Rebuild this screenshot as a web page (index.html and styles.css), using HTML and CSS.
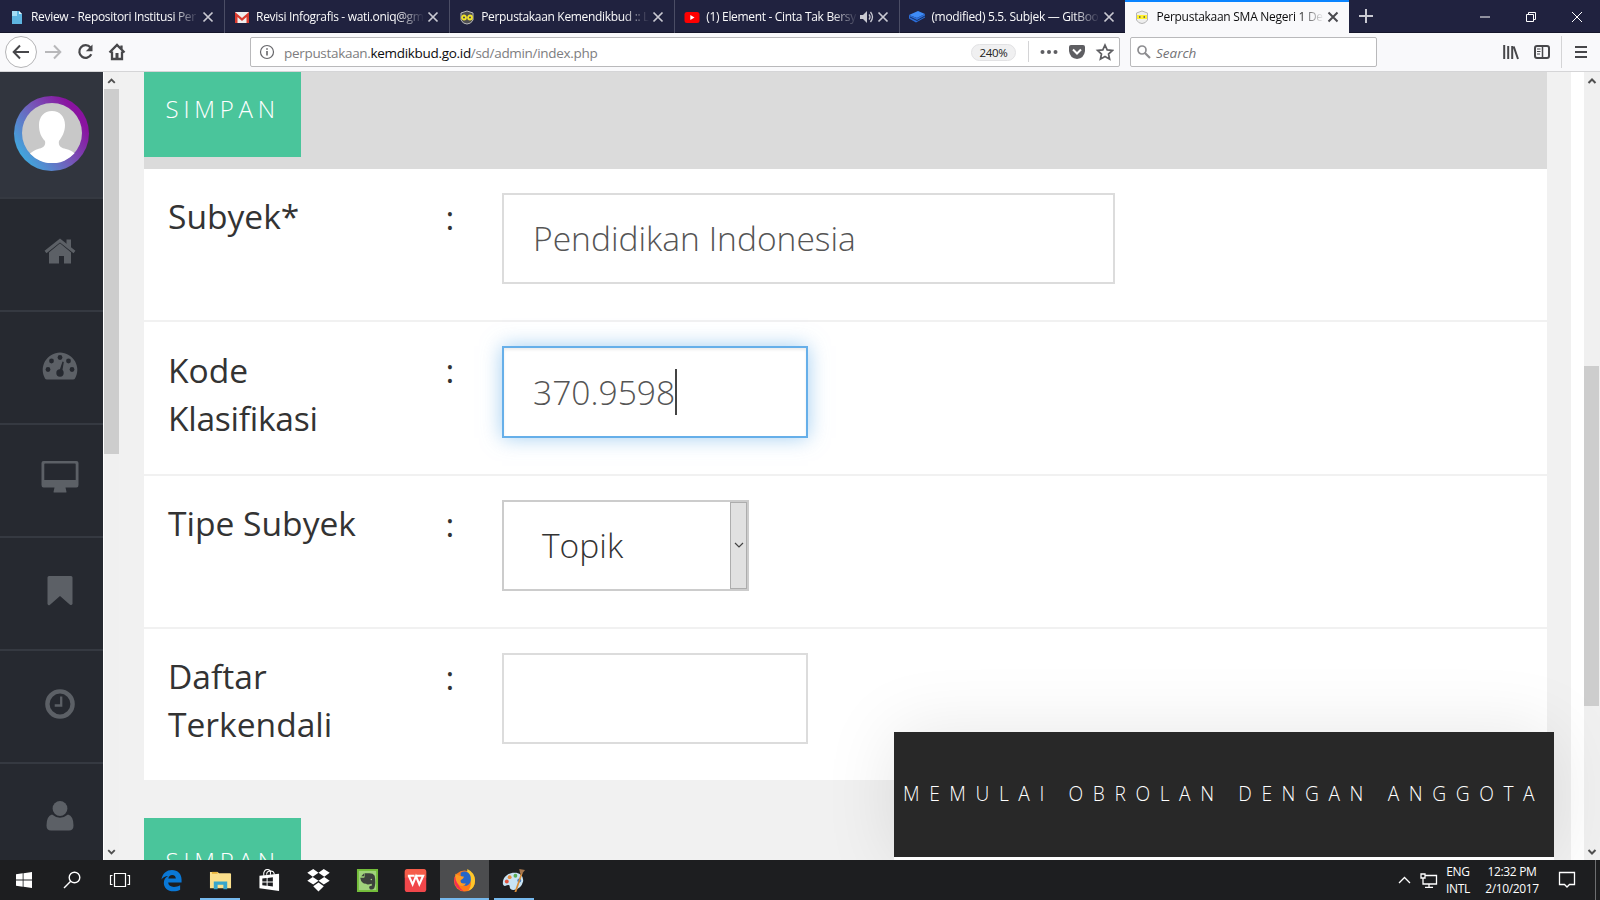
FILE: index.html
```html
<!DOCTYPE html>
<html lang="id">
<head>
<meta charset="utf-8">
<title>Perpustakaan SMA Negeri 1</title>
<link rel="stylesheet" href="styles.css">
</head>
<body>
<header class="tabs">
  <div class="tab">
    <svg class="fav" viewBox="0 0 16 16"><path d="M3 2h7l3 3v10H3z" fill="#5db4e0"/><path d="M3 2h5v5H3z" fill="#a4dcf4"/><path d="M10 2v3h3z" fill="#e8f7ff"/></svg>
    <span class="title">Review - Repositori Institusi Per</span>
    <svg class="close" viewBox="0 0 12 12"><path d="M1.5 1.5l9 9m0-9l-9 9"/></svg>
  </div>
  <div class="tab">
    <svg class="fav" viewBox="0 0 16 16"><path d="M1 3h14v11H1z" fill="#eee"/><path d="M1 14V3l7 6 7-6v11h-2.5V8L8 12 3.500 8v6z" fill="#d93a2f"/></svg>
    <span class="title">Revisi Infografis - wati.oniq@gm</span>
    <svg class="close" viewBox="0 0 12 12"><path d="M1.5 1.5l9 9m0-9l-9 9"/></svg>
  </div>
  <div class="tab">
    <svg class="fav" viewBox="0 0 16 16"><path d="M2 4l6-2 6 2v7q-2 4-6 4t-6-4z" fill="#4c4c50" stroke="#b9b9b9"/><g fill="none" stroke="#f1e32b" stroke-width="1.800"><circle cx="5" cy="8.500" r="2"/><circle cx="11" cy="8.500" r="2"/></g></svg>
    <span class="title">Perpustakaan Kemendikbud :: L</span>
    <svg class="close" viewBox="0 0 12 12"><path d="M1.500 1.500l9 9m0-9l-9 9"/></svg>
  </div>
  <div class="tab">
    <svg class="fav" viewBox="0 0 16 16"><rect x=".5" y="3" width="15" height="11" rx="2.500" fill="#f00"/><path d="M6.300 6v5l4.200-2.500z" fill="#fff"/></svg>
    <span class="title">(1) Element - Cinta Tak Bersy</span>
    <svg class="sound" viewBox="0 0 14 12"><path d="M0 4h3l4-4v12L3 8H0z" fill="#c9c9d2"/><path d="M9 3.500q2 2.500 0 5M10.500 1q4 5 0 10" fill="none" stroke="#c9c9d2" stroke-width="1.300"/></svg>
    <svg class="close" viewBox="0 0 12 12"><path d="M1.500 1.500l9 9m0-9l-9 9"/></svg>
  </div>
  <div class="tab">
    <svg class="fav" viewBox="0 0 16 16"><path d="M0 6l9-4 7 3-8 4z" fill="#3e8bf5"/><path d="M0 6v3.500l7 4 9-5V5L8 9z" fill="#2b6edb"/><path d="M1 8l7 3.500L16 7" fill="none" stroke="#17305f"/></svg>
    <span class="title">(modified) 5.5. Subjek — GitBoo</span>
    <svg class="close" viewBox="0 0 12 12"><path d="M1.500 1.500l9 9m0-9l-9 9"/></svg>
  </div>
  <div class="tab active">
    <svg class="fav" viewBox="0 0 16 16"><path d="M2.500 4L8 2l5.500 2v7q-2 3.500-5.500 3.500T2.500 11z" fill="#eee" stroke="#b5b5b5"/><path d="M3 6h10v4H3z" fill="#fff12e"/><path d="M5 8h1.500M9.500 8H11" stroke="#555" stroke-width="1.500"/></svg>
    <span class="title">Perpustakaan SMA Negeri 1 Dep</span>
    <svg class="close" viewBox="0 0 12 12"><path d="M1.500 1.500l9 9m0-9l-9 9"/></svg>
  </div>
  <svg class="newtab" viewBox="0 0 14 14"><path d="M7 0v14M0 7h14"/></svg>
  <div class="window-buttons">
    <svg viewBox="0 0 12 12"><path d="M1 6h10"/></svg>
    <svg viewBox="0 0 12 12"><path d="M1.500 3.500h7v7h-7zM3.500 3.500v-2h7v7h-2"/></svg>
    <svg viewBox="0 0 12 12"><path d="M1 1l10 10M11 1L1 11"/></svg>
  </div>
</header>

<nav class="toolbar">
  <svg class="nav-icons" viewBox="0 0 130 38" fill="none">
    <circle cx="21" cy="19" r="15.500" fill="#fff" stroke="#b5b5b7"/>
    <path d="M14 19h15M20 12.500L13.700 19l6.300 6.500" stroke="#47474a" stroke-width="2"/>
    <path d="M45 19h15M54 12.500l6.300 6.500-6.300 6.500" stroke="#b8b8ba" stroke-width="2"/>
    <path d="M90.500 14.500a6.300 6.300 0 1 0 .8 6.800" stroke="#47474a" stroke-width="2.200"/>
    <path d="M92.500 11.500v6.700h-6.700z" fill="#47474a"/>
    <path d="M109.500 19.500l7.500-7.500 7.500 7.500M112 18.500V26h10v-7.500M121.500 16v-3.500" stroke="#47474a" stroke-width="2.300"/>
    <path d="M115.500 20h3v6h-3z" fill="#47474a"/>
  </svg>
  <div class="urlbar">
    <svg class="info" viewBox="0 0 16 16"><circle cx="8" cy="8" r="6.500" fill="none" stroke="#66666a" stroke-width="1.200"/><path d="M8 7v4.500M8 4.200v1.600" stroke="#66666a" stroke-width="1.600"/></svg>
    <span class="url">perpustakaan.<b>kemdikbud.go.id</b>/sd/admin/index.php</span>
    <span class="zoom-level">240%</span>
    <svg class="actions" viewBox="0 0 86 24">
      <path d="M.5 1v21" stroke="#d4d4d6"/>
      <g fill="#5e5e62"><circle cx="14.500" cy="12" r="2"/><circle cx="21" cy="12" r="2"/><circle cx="27.500" cy="12" r="2"/><path d="M43 5h12q2 0 2 2v4q-1 7.500-8 8-7-.5-8-8V7q0-2 2-2z"/></g>
      <path d="M45 9.500l4 4 4-4" fill="none" stroke="#fff" stroke-width="2"/>
      <path d="M77 5l2.200 4.900 5.200.6-3.900 3.500 1.100 5.200-4.600-2.600-4.600 2.600 1.100-5.200-3.900-3.500 5.200-.6z" fill="none" stroke="#5e5e62" stroke-width="1.700"/>
    </svg>
  </div>
  <div class="searchbar">
    <svg viewBox="0 0 14 14"><circle cx="5" cy="5" r="4" fill="none" stroke="#8d8d90" stroke-width="1.700"/><path d="M8 8l5 5" stroke="#8d8d90" stroke-width="2.200"/></svg>
    <span>Search</span>
  </div>
  <svg class="menu-icons" viewBox="0 0 90 38" fill="none" stroke="#47474a">
    <path d="M5.200 12v14M9.200 13v13M13.200 13v13M14.700 13.500L19 26" stroke-width="2"/>
    <rect x="36" y="13" width="14" height="12" rx="2" stroke-width="2"/><path d="M43.500 13v12" stroke-width="1.500"/><path d="M38 16h3.500M38 18.500h3.500M38 21h3" stroke-width="1"/>
    <path d="M62.500 3v32" stroke="#d4d4d6"/>
    <path d="M76 14h12M76 19h12M76 24h12" stroke-width="2"/>
  </svg>
</nav>

<main class="viewport">
  <aside class="sidebar">
    <div class="profile">
      <div class="ring"><svg viewBox="0 0 60 60"><circle cx="30" cy="30" r="30" fill="#c8c8c8"/><path d="M30 8c8 0 13 6 13 14 0 7-3 12-6 16-1 5 2 7 7 8 4 1 6 2 8.500 4.300A30 30 0 0 1 8 50.500c3-2.500 5-3.500 8-4.500 5-1 8-3 7-8-4-4-6-9-6-16C17 14 22 8 30 8z" fill="#fff"/></svg></div>
    </div>
    <div class="item"><svg viewBox="0 0 40 40"><path d="M20 10.500l11 9v13h-7v-7.500h-5v7.500H9V19.500z"/><path d="M5.500 21L20 9l14.500 12" fill="none" stroke="#262930" stroke-width="5"/><path d="M26.500 8.500h4.500v9l-4.500-4z"/><path d="M5.500 21L20 9.500l14.500 11.500" fill="none" stroke="#5c6066" stroke-width="3"/></svg></div>
    <div class="item"><svg viewBox="0 0 40 40"><path d="M5 34.500A17.300 17.300 0 1 1 35 34.500q-.5 1-2 1H7q-1.500 0-2-1z"/><g fill="#262930"><circle cx="8" cy="25.500" r="2.400"/><circle cx="11.500" cy="17" r="2.400"/><circle cx="20" cy="13.500" r="2.400"/><circle cx="28.500" cy="17" r="2.400"/><circle cx="32" cy="25.500" r="2.400"/><circle cx="20" cy="29" r="3.700"/><path d="M19 28l3.500-10.500 1.300.4L22 29z"/></g></svg></div>
    <div class="item"><svg viewBox="0 0 40 40"><path fill-rule="evenodd" d="M3.500 4h33q2 0 2 2v22q0 2.500-2 2.500h-11l1 4.500q0 .5-1 .5h-11q-1 0-1-.5l1-4.500h-11q-2 0-2-2.500V6q0-2 2-2zM5 6.500q-.7 0-.7.700V23h31.400V7.200q0-.7-.7-.7z"/></svg></div>
    <div class="item"><svg viewBox="0 0 40 40"><path d="M9 6h22q1.500 0 1.500 1.500V34q-1 1.800-2.500.7L20 26l-10 8.700Q8.500 36 7.500 34V7.500Q7.500 6 9 6z"/></svg></div>
    <div class="item"><svg viewBox="0 0 40 40"><circle cx="20" cy="21" r="12.600" fill="none" stroke="#5c6066" stroke-width="4.400"/><path d="M21.200 13.500v9h-6.500" fill="none" stroke="#5c6066" stroke-width="2.300"/></svg></div>
    <div class="item"><svg viewBox="0 0 40 40"><circle cx="20" cy="12.500" r="7.400"/><path d="M12 18.500q8 6.500 16 0 5.500 1.500 5.500 11 0 5-4.500 5H11q-4.500 0-4.500-5 0-9.500 5.500-11z"/></svg></div>
  </aside>
  <div class="scroll side-scroll">
    <svg viewBox="0 0 16 17"><path d="M4.500 11L8 7.500l3.500 3.500"/></svg>
    <div class="thumb"></div>
    <svg class="down" viewBox="0 0 16 17"><path d="M4.500 7L8 10.500l3.500-3.500"/></svg>
  </div>
  <section class="content">
    <div class="actionbar"><div class="button">SIMPAN</div></div>
    <div class="form">
      <div class="row"><div class="label">Subyek*</div><div class="colon">:</div><div class="field wide">Pendidikan Indonesia</div></div>
      <div class="row"><div class="label">Kode <span class="tight">Klasifikasi</span></div><div class="colon">:</div><div class="field focus">370.9598<i class="caret"></i></div></div>
      <div class="row"><div class="label">Tipe Subyek</div><div class="colon">:</div><div class="field select"><span>Topik</span><div class="arrow"><svg viewBox="0 0 10 6"><path d="M1 1l4 4 4-4"/></svg></div></div></div>
      <div class="row"><div class="label">Daftar Terkendali</div><div class="colon">:</div><div class="field"></div></div>
    </div>
    <div class="button second">SIMPAN</div>
  </section>
  <div class="gutter"></div>
  <div class="scroll page-scroll">
    <svg viewBox="0 0 16 17"><path d="M4.500 11L8 7.500l3.500 3.500"/></svg>
    <div class="thumb"></div>
    <svg class="down" viewBox="0 0 16 17"><path d="M4.500 7L8 10.500l3.500-3.500"/></svg>
  </div>
  <div class="chat"><span>MEMULAI OBROLAN DENGAN ANGGOTA</span></div>
</main>

<footer class="taskbar">
  <div class="sys"><svg viewBox="0 0 24 24"><path d="M4 6.300l6.700-1v6.200H4zM11.500 5.200L20 4v7.500h-8.500zM4 12.500h6.700v6.300L4 17.800zM11.500 12.500H20V20l-8.500-1.200z" fill="#fff"/></svg></div>
  <div class="sys"><svg viewBox="0 0 24 24" fill="none" stroke="#fff" stroke-width="1.400"><circle cx="14.500" cy="9.500" r="5.300"/><path d="M10.700 13.300L4 20"/></svg></div>
  <div class="sys"><svg viewBox="0 0 24 24" fill="none" stroke="#fff" stroke-width="1.200"><path d="M6.500 5.500h11v13h-11zM4.500 7.500h-2v9h2M19.500 7.500h2v9h-2"/></svg></div>
  <div class="apps">
    <div class="app"><svg viewBox="0 0 24 24"><path d="M1.500 11C2.500 4.500 7 1 12.500 1 18.500 1 22.500 5 22.500 11v3.200H8.500c.3 3 2.500 4.500 6 4.500 2.500 0 4.500-.6 6.500-1.700v4.700C19 22.700 16.800 23.300 14 23.300 8 23.300 4 19.500 4 14.500c0-3.200 1.500-5.700 4.500-7.200C5.500 7.300 3.200 8.800 1.500 11zm7.200-1h7.800c0-2.300-1.300-3.800-3.800-3.800-2.100 0-3.600 1.300-4 3.800z" fill="#0a78d6"/></svg></div>
    <div class="app open"><svg viewBox="0 0 24 24"><path d="M1 3h8l1.500 1.500H22q1 0 1 1V20H1z" fill="#fbe08c"/><path d="M3 3h6v2H3z" fill="#e8b33a"/><path d="M5 13h14v8h-4v-4.500H9V21H5z" fill="#37a6cc"/></svg></div>
    <div class="app"><svg viewBox="0 0 24 24"><path d="M1.500 7L22 5v18L1.500 20z" fill="#fff"/><path d="M6 7V4q1-3.500 4-3.500 2.500 0 3 2.500v3M9 6q0-4 4-4t4 4" fill="none" stroke="#fff" stroke-width="1.100"/><path d="M4.500 10l4.500-.5V13H4.500zM10 9.300l5.500-.6V13H10zM4.500 14H9v3.500l-4.500-.5zM10 14h5.500v4.300l-5.500-.7z" fill="#1b1c1f"/></svg></div>
    <div class="app"><svg viewBox="0 0 24 24" fill="#fff"><path d="M6.500 0L12 3.800 6 8 .3 4zM17.500 0L12 3.800 18 8l5.700-4zM.300 12.300L6 8.300l6 4-5.500 4zM23.700 12.300L18 8.300l-6 4 5.500 4zM12 14l5.500 4L12 23.500 6.500 18z"/></svg></div>
    <div class="app"><svg viewBox="0 0 24 24"><path d="M1 0h22v24H1z" fill="#73bd3a"/><path d="M3 2h18v20H3z" fill="#b8dea0" opacity=".65"/><path d="M9 4.500h5q4 0 5.500 2.500 1.500 8-.5 13-1.500 2-4.500 1-2-3 1-3.500h1v-2q-5 1.500-6 0-5 0-6-6V9h3.500q1 0 1-1z" fill="#3c413c"/><path d="M8.500 4.500v3h-3z" fill="#3c413c"/><circle cx="16" cy="11" r=".8" fill="#a7d18b"/></svg></div>
    <div class="app"><svg viewBox="0 0 24 24"><rect x=".8" y="0" width="22.400" height="24" rx="3" fill="#f1474b"/><path d="M3.800 0h16.400q3 0 3 3v6H.8V3q0-3 3-3z" fill="#f76549" opacity=".7"/><path d="M4 7h7M5 7l4 9 3.500-8.500L16 16l4-9h-7" fill="none" stroke="#fff" stroke-width="2.200"/></svg></div>
    <div class="app open current"><svg viewBox="0 0 24 24"><circle cx="12" cy="12.500" r="11" fill="#ff7a18"/><path d="M1.500 8Q0 20 11 23.300 3 17 6 9z" fill="#f52d53"/><path d="M15 0q8 4 8 12 0 8-7 11 5-8 1-13-3-4-2-10z" fill="#ffc72a"/><path d="M8 4q4-3 8 0 4 4 2 10-3 5-8 3-3-2-2-6z" fill="#2766c6"/><path d="M2.500 5l4 2 5 1-1 2-3 2q0 4 6 3-2 4-7 2-5-4-4-12z" fill="#ff9922"/></svg></div>
    <div class="app open"><svg viewBox="0 0 24 24"><path d="M1 16C0 8 7 3 15 4q8 2 7 9-2 8-10 9-4 0-4-4 0-2-3-1-3 2-4-1z" fill="#c8e3f3"/><circle cx="5" cy="13" r="2" fill="#df533d"/><circle cx="8" cy="8.500" r="2" fill="#e78b3c"/><circle cx="14" cy="7" r="2" fill="#59ad54"/><circle cx="18" cy="12" r="2" fill="#3d7bc5"/><path d="M20 4l1.500.5L15 24l-2 0z" fill="#d88b36"/><path d="M18 0l6 1-3 4-2 0z" fill="#a6774d"/></svg></div>
  </div>
  <div class="tray">
    <svg viewBox="0 0 44 20" fill="none" stroke="#fff" stroke-width="1.300"><path d="M2 13l5.500-5.500L13 13"/><path d="M28 5.500h11.500v8.500H26v-4M32 14v3M28 17.300h8M24 4h4v4h-4zM26 8v3"/></svg>
    <div class="lang">ENG<br>INTL</div>
    <div class="clock">12:32 PM<br>2/10/2017</div>
    <svg class="notes" viewBox="0 0 18 18" fill="none" stroke="#fff" stroke-width="1.300"><path d="M1.500 1.500h15v12h-5L9 16l-2.500-2.500h-5z"/></svg>
    <i class="peek"></i>
  </div>
</footer>
</body>
</html>
```
FILE: styles.css
```css
* { box-sizing: border-box; }
body {
  margin: 0;
  width: 1600px;
  height: 900px;
  overflow: hidden;
  display: flex;
  flex-direction: column;
  font-family: "Open Sans", "Noto Sans", sans-serif;
}
svg { display: block; flex: none; }

/* Tab strip */
.tabs { height: 33px; flex: none; display: flex; background: #20223f; border-bottom: 1px solid #15162b; }
.tab {
  width: 225.100px;
  flex: none;
  height: 33px;
  padding: 0 10px 0 9px;
  display: flex;
  align-items: center;
  border-right: 1px solid #4b4d65;
  color: #f9f9fa;
  font-size: 12px;
}
.tab:nth-child(5) { border-right: 0; }
.fav { width: 16px; height: 16px; margin-right: 6px; }
.title {
  flex: 1;
  min-width: 0;
  white-space: nowrap;
  letter-spacing: -0.320px;
  -webkit-mask-image: linear-gradient(to right, #000 calc(100% - 26px), transparent);
  mask-image: linear-gradient(to right, #000 calc(100% - 26px), transparent);
}
.close { width: 12px; height: 12px; margin-left: 3px; fill: none; stroke: #c9c9d2; stroke-width: 1.700; }
.sound { width: 14px; height: 12px; margin-left: 2px; }
.active { background: #f9f9fb; color: #0c0c0d; border-right: 0; border-top: 2px solid #0a84ff; width: 223.500px; padding-bottom: 2px; }
.active .title { letter-spacing: -0.270px; }
.active .close { stroke: #4a4a4f; stroke-width: 2; }
.newtab { width: 14px; height: 14px; margin: 9px 0 0 10px; fill: none; stroke: #c9c9d2; stroke-width: 2; }
.window-buttons { margin: 11px 17px 0 auto; display: flex; gap: 34px; }
.window-buttons svg { width: 12px; height: 12px; fill: none; stroke: #fff; stroke-width: 1; }

/* Navigation toolbar */
.toolbar { height: 39px; flex: none; display: flex; background: #f9f9fb; border-bottom: 1px solid #d5d5d7; }
.nav-icons { width: 130px; height: 38px; }
.urlbar, .searchbar { height: 30px; margin-top: 4px; background: #fff; border: 1px solid #b9b9bb; border-radius: 2px; display: flex; align-items: center; }
.urlbar { width: 870px; margin-left: 120px; padding-left: 8px; }
.info { width: 16px; height: 16px; }
.url { margin-left: 9px; padding-top: 2px; flex: 1; font-size: 13.500px; letter-spacing: -0.310px; color: #7d7d80; white-space: nowrap; }
.url b { font-weight: 400; color: #0c0c0d; }
.zoom-level { width: 45px; height: 17px; border: 1px solid #e2e2e4; border-radius: 9px; background: #f0f0f1; font-size: 11.500px; letter-spacing: -0.300px; line-height: 16px; text-align: center; color: #222; }
.actions { width: 86px; height: 24px; margin: 0 5px 0 12px; }
.searchbar { width: 247px; margin-left: 10px; padding-left: 6px; }
.searchbar svg { width: 14px; height: 14px; }
.searchbar span { margin-left: 5px; padding-top: 2px; font-size: 13.500px; font-style: italic; color: #737376; }
.menu-icons { width: 90px; height: 38px; margin-left: 122px; }

/* Page */
.viewport { position: relative; height: 788px; flex: none; display: flex; overflow: hidden; background: #f1f1f1; }
.sidebar { width: 103px; flex: none; overflow: hidden; background: #262930; }
.profile { height: 127px; padding: 23.500px 0 0 14px; background: #31353e; border-bottom: 2px solid #353941; }
.ring { width: 75px; height: 75px; padding: 7.500px; border-radius: 50%; background: linear-gradient(55deg, #42a5dc 15%, #7558b8 50%, #8a13a0 80%); }
.ring svg { width: 60px; height: 60px; }
.item { height: 113px; padding: 32px 0 0 40px; border-bottom: 2px solid #353941; }
.item svg { width: 40px; height: 40px; fill: #5c6066; }
.scroll { flex: none; width: 16px; display: flex; flex-direction: column; background: #f0f0f0; }
.scroll svg { width: 16px; height: 17px; fill: none; stroke: #505050; stroke-width: 2; }
.scroll .thumb { width: 15px; background: #cdcdcd; }
.scroll .down { margin-top: auto; }
.side-scroll { border-left: 1px solid #fff; }
.side-scroll svg { width: 15px; }
.side-scroll .thumb { height: 365px; }
.page-scroll .thumb { height: 340px; margin-top: 277px; }
.content { width: 1403px; flex: none; margin-left: 25px; }
.actionbar { height: 97px; background: #dbdbdb; }
.button { width: 157px; height: 85px; padding: 20px 0 0 21.500px; background: #4ac59b; color: #fff; font-size: 24px; font-weight: 300; line-height: 34px; letter-spacing: 4.800px; }
.second { margin-top: 38px; padding-top: 26px; }
.form { height: 611px; background: #fff; color: #333; font-size: 33.600px; line-height: 48px; }
.row { height: 153.300px; padding: 24px; display: flex; border-bottom: 2px solid #f1f1f1; }
.row:last-child { border-bottom: 0; }
.label { width: 200px; margin-top: -0.600px; }
.tight { letter-spacing: -0.280px; }
.colon { width: 134px; padding-left: 77.500px; }
.field { width: 306px; height: 91px; padding: 0 29px; border: 2px solid #dcdcdc; background: #fff; color: #555; font-weight: 300; line-height: 87px; white-space: nowrap; display: flex; align-items: center; }
.wide { width: 613px; }
.focus { height: 92px; border-color: #66afe9; box-shadow: inset 0 2px 3px rgba(0,0,0,.075), 0 0 19px rgba(102,175,233,.6); }
.caret { width: 2px; height: 46px; background: #444; }
.select { width: 247px; padding: 0 0 0 38px; border-color: #ccc; justify-content: space-between; color: #333; }
.arrow { width: 17px; height: 87px; background: #e1e1e1; border: 1px solid #adadad; display: flex; align-items: center; justify-content: center; }
.arrow svg { width: 10px; height: 6px; fill: none; stroke: #444; stroke-width: 1.200; }
.gutter { width: 37px; flex: none; border-right: 13px solid #fff; background: #f1f1f1; }
.chat { position: absolute; left: 894px; bottom: 0; width: 660px; height: 128px; padding: 0 0 3px 9px; background: #282828; border-bottom: 3px solid #fff; box-shadow: 0 0 72px rgba(0,0,0,.1); color: #fff; display: flex; align-items: center; font-size: 19.200px; font-weight: 300; letter-spacing: 9.600px; white-space: nowrap; }

/* Taskbar */
.taskbar { height: 40px; flex: none; display: flex; background: #1d1e20; color: #fff; }
.sys { width: 48px; display: flex; align-items: center; justify-content: center; }
.sys svg { width: 24px; height: 24px; }
.apps { display: flex; margin-left: 3px; }
.app { width: 48.900px; display: flex; align-items: center; justify-content: center; }
.app svg { width: 23px; height: 23px; }
.open { background: linear-gradient(#76b9ed, #76b9ed) bottom / 40px 2px no-repeat; }
.current { background: linear-gradient(#76b9ed, #76b9ed) bottom / 100% 2px no-repeat #4c4d4f; }
.tray { margin-left: auto; display: flex; align-items: center; font-size: 12px; line-height: 17.500px; letter-spacing: -0.350px; text-align: center; }
.tray svg { width: 44px; height: 20px; }
.lang { width: 30px; margin-left: 2px; }
.clock { width: 60px; margin-left: 9px; }
.tray .notes { width: 18px; height: 18px; margin-left: 16px; }
.peek { width: 1px; height: 40px; margin: 0 4px 0 19px; background: #6d6e70; }
```
